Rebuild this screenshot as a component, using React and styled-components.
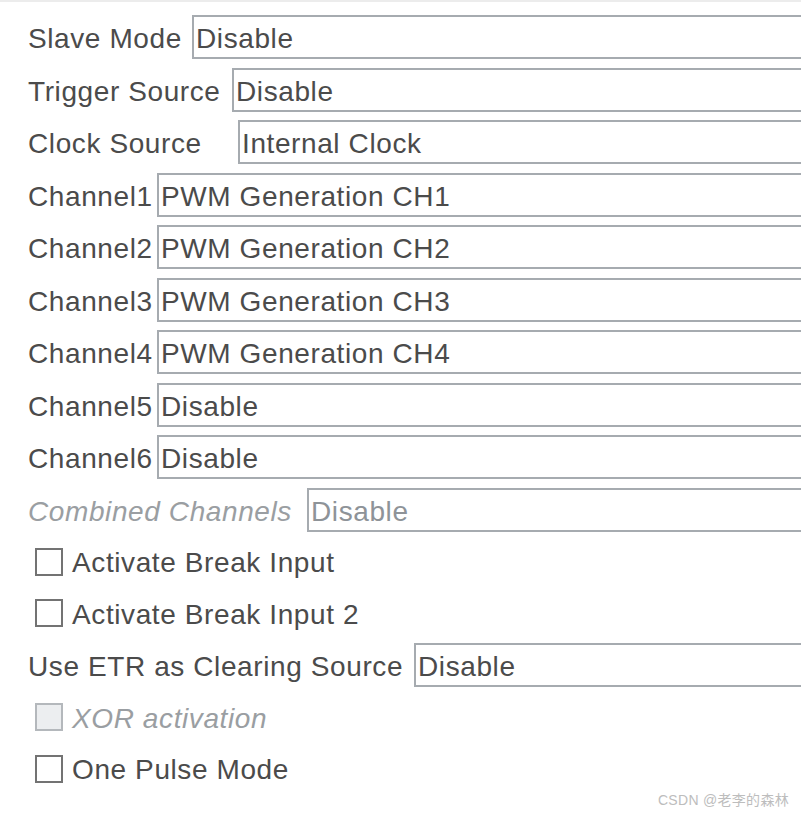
import React from "react";
import styled, { createGlobalStyle } from "styled-components";

const Global = createGlobalStyle`
  html, body { margin: 0; padding: 0; background: #fff; overflow: hidden; }
  body { font-family: "Liberation Sans", Arial, sans-serif; }
`;

const Page = styled.div`
  position: relative;
  width: 801px;
  height: 817px;
  box-sizing: border-box;
  border-top: 2px solid #ececec;
  padding-top: 13px;
  overflow: hidden;
`;

const Form = styled.div`
  display: flex;
  flex-direction: column;
  gap: 8.5px;
  padding-left: 28px;
`;

const Row = styled.div`
  display: flex;
  align-items: center;
  height: 44px;
`;

const Label = styled.div`
  width: ${(p) => p.$w}px;
  flex: none;
  white-space: nowrap;
  font-size: 28px;
  letter-spacing: 0.6px;
  padding-top: 4px;
  color: ${(p) => (p.$disabled ? "#9a9ea2" : "#4b4b4b")};
  font-style: ${(p) => (p.$disabled ? "italic" : "normal")};
`;

const Field = styled.div`
  flex: 1;
  height: 44px;
  margin-right: -20px;
  box-sizing: border-box;
  border: 2px solid #a6abb0;
  background: #fff;
  display: flex;
  align-items: center;
  padding-left: 2px;
  padding-top: 4px;
  font-size: 28px;
  letter-spacing: 0.6px;
  white-space: nowrap;
  color: ${(p) => (p.$disabled ? "#8e9398" : "#4b4b4b")};
`;

const CheckRow = styled.div`
  display: flex;
  align-items: center;
  height: 43px;
  padding-left: 7px;
  gap: 9px;
`;

const Box = styled.span`
  width: 28px;
  height: 28px;
  box-sizing: border-box;
  border: 2px solid ${(p) => (p.$disabled ? "#b4b8bc" : "#737373")};
  background: ${(p) => (p.$disabled ? "#eceef0" : "#fff")};
  flex: none;
`;

const CheckText = styled.span`
  font-size: 28px;
  letter-spacing: 0.6px;
  padding-top: 3px;
  white-space: nowrap;
  color: ${(p) => (p.$disabled ? "#9a9ea2" : "#4b4b4b")};
  font-style: ${(p) => (p.$disabled ? "italic" : "normal")};
`;

const Watermark = styled.div`
  position: absolute;
  right: 12px;
  bottom: 8px;
  font-family: "Liberation Sans", "Noto Sans CJK SC", sans-serif;
  font-size: 14px;
  color: #bdbdbd;
  letter-spacing: 0.3px;
`;

const selects = [
  { label: "Slave Mode", w: 164, value: "Disable" },
  { label: "Trigger Source", w: 204, value: "Disable" },
  { label: "Clock Source", w: 210, value: "Internal Clock" },
  { label: "Channel1", w: 129, value: "PWM Generation CH1" },
  { label: "Channel2", w: 129, value: "PWM Generation CH2" },
  { label: "Channel3", w: 129, value: "PWM Generation CH3" },
  { label: "Channel4", w: 129, value: "PWM Generation CH4" },
  { label: "Channel5", w: 129, value: "Disable" },
  { label: "Channel6", w: 129, value: "Disable" },
  { label: "Combined Channels", w: 279, value: "Disable", disabled: true },
];

export default function App() {
  return (
    <>
      <Global />
      <Page>
        <Form>
          {selects.map((s) => (
            <Row key={s.label}>
              <Label $w={s.w} $disabled={s.disabled}>{s.label}</Label>
              <Field $disabled={s.disabled}>{s.value}</Field>
            </Row>
          ))}
          <CheckRow>
            <Box />
            <CheckText>Activate Break Input</CheckText>
          </CheckRow>
          <CheckRow>
            <Box />
            <CheckText>Activate Break Input 2</CheckText>
          </CheckRow>
          <Row>
            <Label $w={386}>Use ETR as Clearing Source</Label>
            <Field>Disable</Field>
          </Row>
          <CheckRow>
            <Box $disabled />
            <CheckText $disabled>XOR activation</CheckText>
          </CheckRow>
          <CheckRow>
            <Box />
            <CheckText>One Pulse Mode</CheckText>
          </CheckRow>
        </Form>
        <Watermark>CSDN @老李的森林</Watermark>
      </Page>
    </>
  );
}
